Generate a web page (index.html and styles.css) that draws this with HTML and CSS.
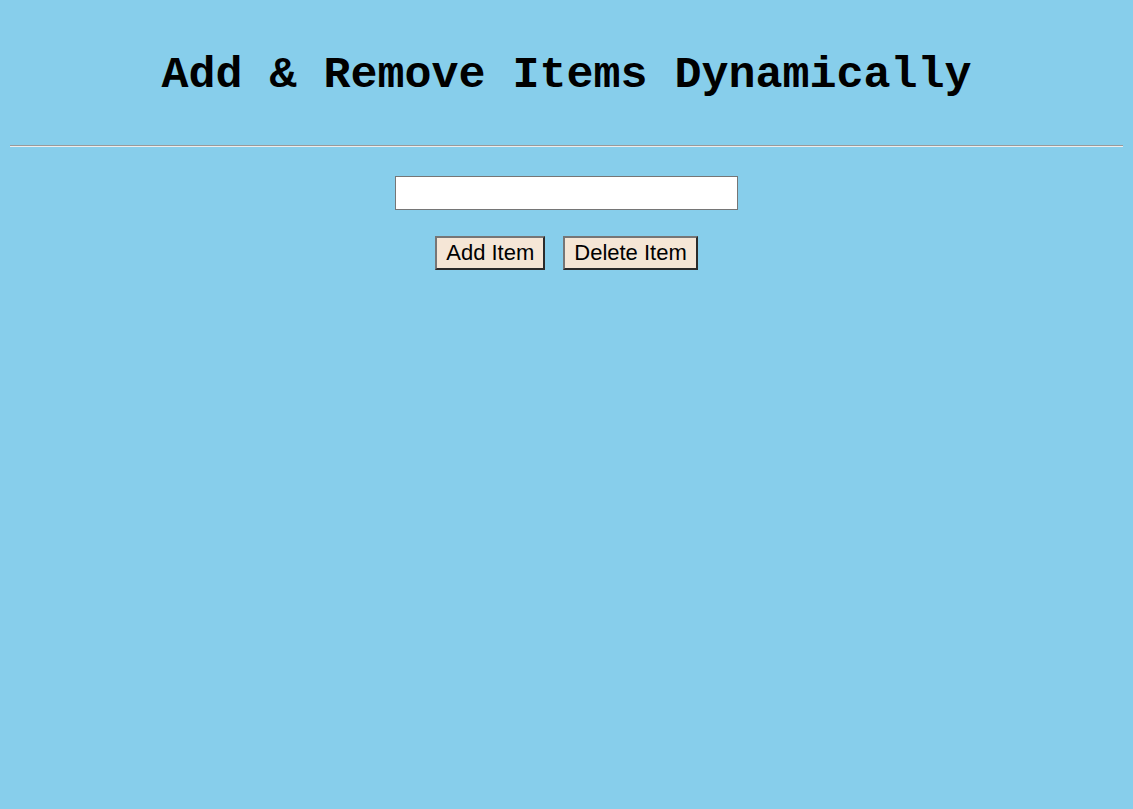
FILE: index.html
```html
<!DOCTYPE html>
<html lang="en">
<head>
<meta charset="utf-8">
<title>Add &amp; Remove Items Dynamically</title>
<link rel="stylesheet" href="styles.css">
</head>
<body>
<div class="page">
  <h1 class="title">Add &amp; Remove Items Dynamically</h1>
  <hr class="divider">
  <div class="form">
    <input class="item-input" type="text">
    <div class="actions">
      <button class="btn" type="button">Add Item</button>
      <button class="btn" type="button">Delete Item</button>
    </div>
  </div>
</div>
</body>
</html>
```

FILE: styles.css
```css
html, body {
  margin: 0;
  padding: 0;
  background: #87ceeb;
  min-height: 100%;
}

.page {
  padding: 0 10px;
}

.title {
  margin: 0;
  padding-top: 50px;
  font-family: "Liberation Mono", "Courier New", monospace;
  font-weight: bold;
  font-size: 45px;
  line-height: 51px;
  text-align: center;
  color: #000;
}

.divider {
  margin: 44px 0 0 0;
  border: 0;
  border-top: 1px solid #9a9a9a;
  border-bottom: 1px solid #eeeeee;
  height: 0;
}

.form {
  display: flex;
  flex-direction: column;
  align-items: center;
  padding-top: 29px;
  gap: 26px;
}

.item-input {
  box-sizing: border-box;
  width: 343px;
  height: 34px;
  margin: 0;
  border: 1px solid #767676;
  background: #fff;
  font-family: "Liberation Sans", Arial, sans-serif;
  font-size: 20px;
  padding: 2px 4px;
}

.actions {
  display: flex;
  gap: 18px;
  justify-content: center;
}

.btn {
  box-sizing: border-box;
  height: 34px;
  margin: 0;
  padding: 0 9px;
  font-family: "Liberation Sans", Arial, sans-serif;
  font-size: 22px;
  line-height: 26px;
  color: #000;
  background: #f5e6d6;
  border-style: solid;
  border-width: 2px;
  border-color: #767676 #2b2b2b #2b2b2b #767676;
}
```
